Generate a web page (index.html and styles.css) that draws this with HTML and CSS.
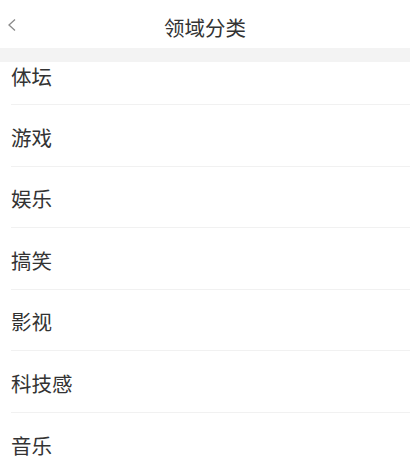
FILE: index.html
```html
<!DOCTYPE html>
<html lang="zh-CN">
<head>
<meta charset="utf-8">
<title>领域分类</title>
<link rel="stylesheet" href="styles.css">
</head>
<body>
<div class="page">
  <header class="header">
    <span class="back">
      <svg width="12" height="14" viewBox="0 0 12 14"><path d="M9 1.5 L3 7 L9 12.5" fill="none" stroke="#8a8a8a" stroke-width="1.3"/></svg>
    </span>
    <h1 class="title">领域分类</h1>
  </header>
  <div class="band"></div>
  <ul class="list">
    <li class="row first">体坛</li>
    <li class="row">游戏</li>
    <li class="row">娱乐</li>
    <li class="row">搞笑</li>
    <li class="row">影视</li>
    <li class="row">科技感</li>
    <li class="row">音乐</li>
  </ul>
</div>
</body>
</html>
```
FILE: styles.css
```css
* { box-sizing: border-box; }
html, body { margin: 0; padding: 0; background: #fff; }
body {
  font-family: "Noto Sans CJK SC", "Noto Sans", sans-serif;
  color: #333;
  width: 410px;
  height: 470px;
  overflow: hidden;
}
.header {
  position: relative;
  height: 48px;
  display: flex;
  align-items: center;
  justify-content: center;
  padding-top: 6px;
}
.back {
  position: absolute;
  left: 6px;
  top: 18px;
  display: flex;
}
.title {
  margin: 0;
  font-size: 20.5px;
  font-weight: 400;
  color: #333;
  line-height: 1;
}
.band {
  height: 14px;
  background: #f3f3f3;
}
.list {
  list-style: none;
  margin: 0;
  padding: 0 0 0 11px;
}
.row {
  height: 61.6px;
  display: flex;
  align-items: center;
  padding-top: 3px;
  font-size: 20.5px;
  line-height: 1;
  border-bottom: 1px solid #f1f1f1;
  color: #333;
}
.row.first {
  height: 43px;
  padding-top: 0;
  padding-bottom: 14px;
}
```
